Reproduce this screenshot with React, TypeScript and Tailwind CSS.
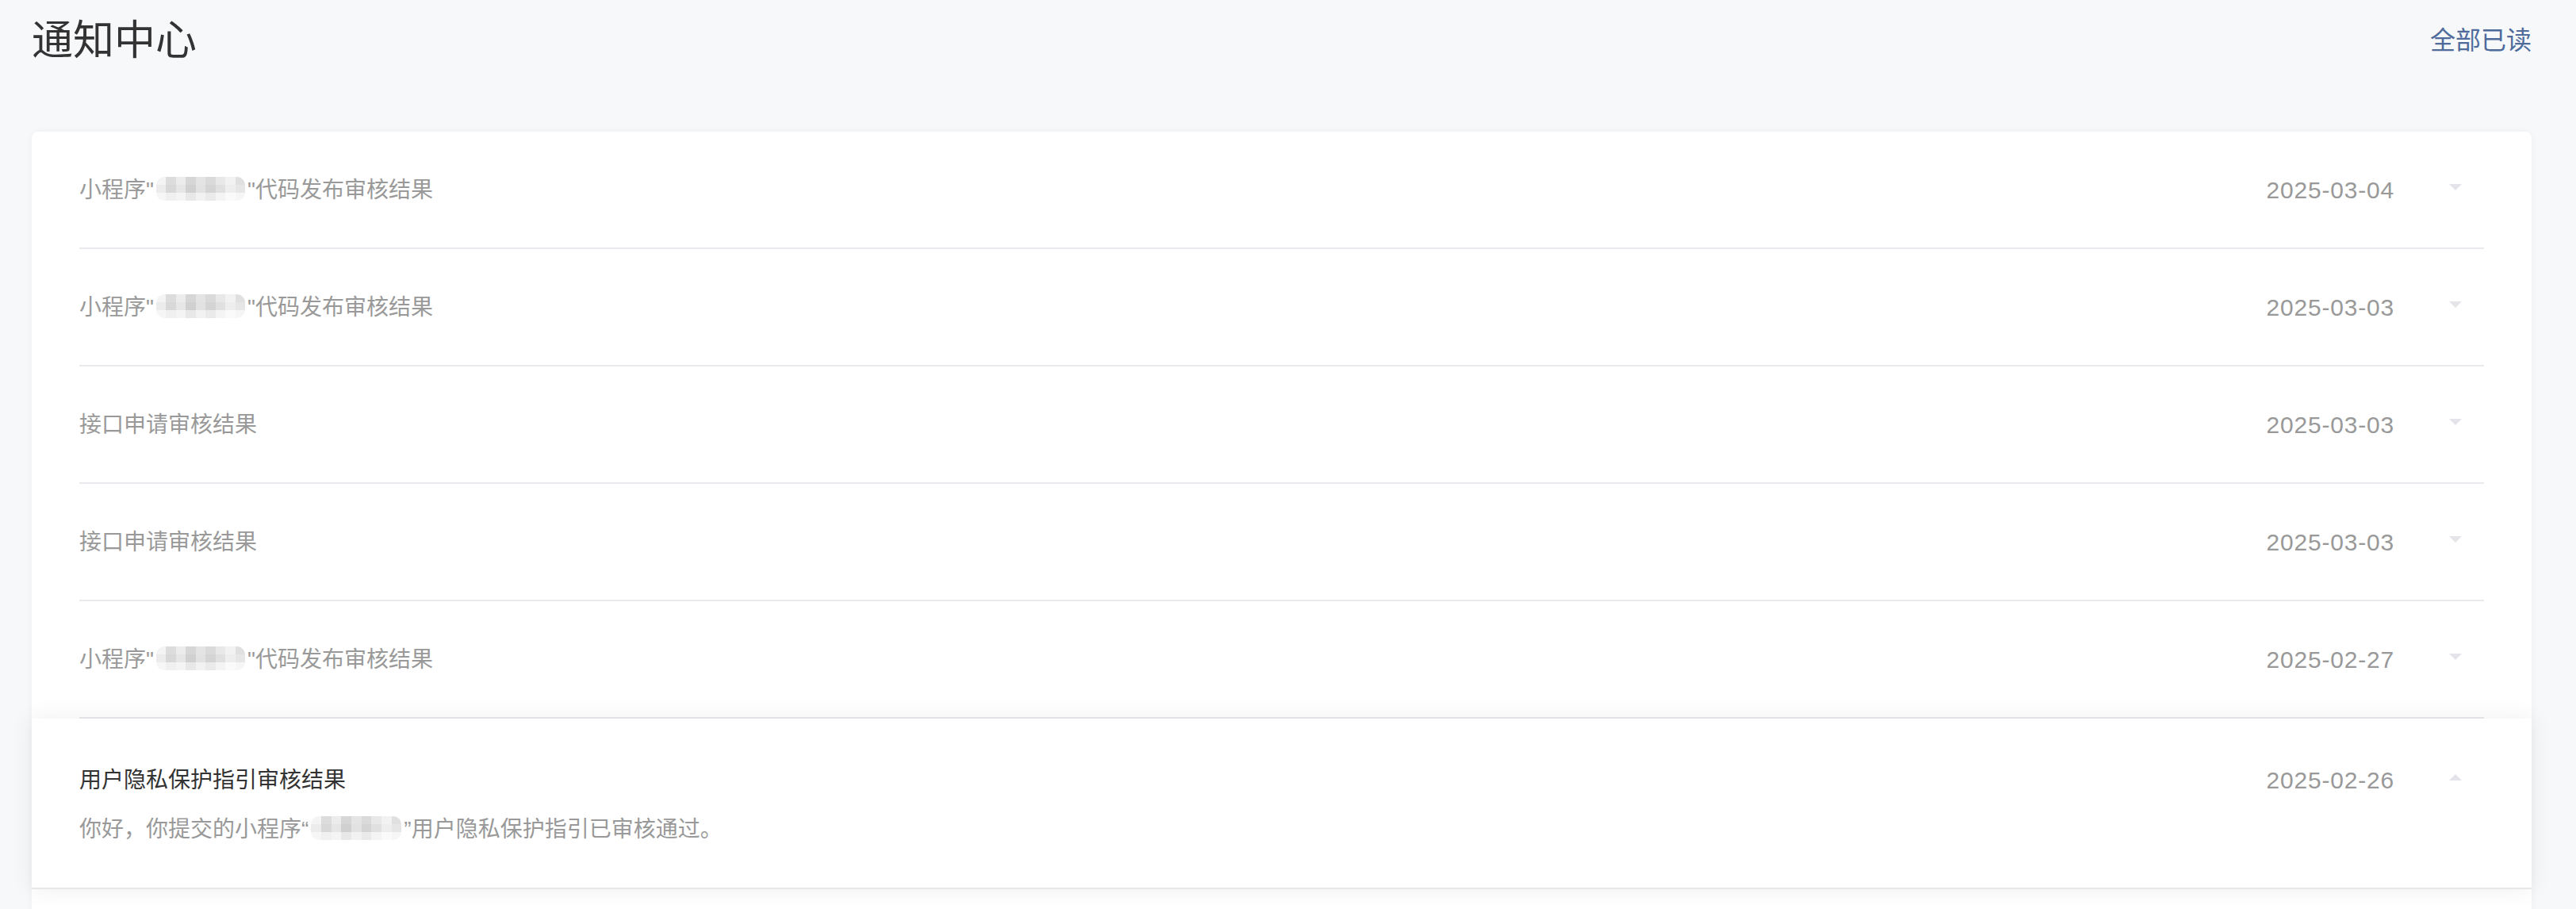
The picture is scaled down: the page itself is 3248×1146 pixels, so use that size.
import React from 'react';

type Notice = {
  id: number;
  prefix: string;
  masked?: boolean;
  suffix?: string;
  date: string;
};

const notices: Notice[] = [
  { id: 1, prefix: '小程序"', masked: true, suffix: '"代码发布审核结果', date: '2025-03-04' },
  { id: 2, prefix: '小程序"', masked: true, suffix: '"代码发布审核结果', date: '2025-03-03' },
  { id: 3, prefix: '接口申请审核结果', date: '2025-03-03' },
  { id: 4, prefix: '接口申请审核结果', date: '2025-03-03' },
  { id: 5, prefix: '小程序"', masked: true, suffix: '"代码发布审核结果', date: '2025-02-27' },
];

// pixelated name, rows of gray cells
const mosaicCells = [
  ['#f4f4f4', '#dcdcdc', '#ececec', '#d6d6d6', '#e4e4e4', '#dadada', '#e8e8e8', '#f2f2f2', '#e0e0e0'],
  ['#ececec', '#d8d8d8', '#e6e6e6', '#d0d0d0', '#e2e2e2', '#d4d4d4', '#e0e0e0', '#eeeeee', '#e6e6e6'],
  ['#f6f6f6', '#f0f0f0', '#f4f4f4', '#e8e8e8', '#f2f2f2', '#eaeaea', '#f4f4f4', '#fafafa', '#f6f6f6'],
];

const Mosaic = ({ width = 112 }: { width?: number }) => (
  <span
    className="inline-grid align-middle mx-[3px] rounded-[10px] overflow-hidden -mt-[4px]"
    style={{ width, gridTemplateColumns: `repeat(9, 1fr)` }}
  >
    {mosaicCells.flat().map((c, i) => (
      <span key={i} className="block h-[10px]" style={{ backgroundColor: c }} />
    ))}
  </span>
);

const Arrow = ({ up = false }: { up?: boolean }) =>
  up ? (
    <span className="block w-0 h-0 border-l-[8px] border-r-[8px] border-b-[8px] border-l-transparent border-r-transparent border-b-[#e4e4ea]" />
  ) : (
    <span className="block w-0 h-0 border-l-[8px] border-r-[8px] border-t-[8px] border-l-transparent border-r-transparent border-t-[#e4e4ea]" />
  );

export default function App() {
  return (
    <div
      className="min-h-[1146px] bg-[#f7f8fa] pl-[40px] pr-[56px] overflow-hidden"
      style={{ fontFamily: '"Liberation Sans", "Noto Sans CJK SC", sans-serif' }}
    >
      {/* Header */}
      <div className="h-[102px] flex items-center justify-between">
        <h1 className="text-[52px] leading-[75px] text-[#333333] font-normal">通知中心</h1>
        <button className="text-[32px] leading-[48px] text-[#4e6b9c]">全部已读</button>
      </div>

      {/* List card */}
      <div className="mt-[64px] bg-white rounded-[8px] shadow-[0_0_10px_rgba(0,0,0,0.04)]">
        {notices.map((n) => (
          <div key={n.id} className="mx-[60px] h-[148px] flex items-center border-b-2 border-[#e9e9ee]">
            <div className="flex-1 pt-[2px] text-[28px] leading-[42px] text-[#999999] flex items-center">
              <span>{n.prefix}</span>
              {n.masked && <Mosaic />}
              {n.suffix && <span>{n.suffix}</span>}
            </div>
            <span className="pt-[2px] text-[30px] leading-[42px] tracking-[0.8px] text-[#999999]">{n.date}</span>
            <div className="ml-[69px] mr-[28px] -mt-[6px]">
              <Arrow />
            </div>
          </div>
        ))}

        {/* Expanded notice */}
        <div className="relative z-10 bg-white px-[60px] pt-[57px] pb-[52px] border-b-2 border-[#e8e8ec] shadow-[0_0_28px_rgba(0,0,0,0.07)]">
          <div className="flex items-center">
            <div className="flex-1 text-[28px] leading-[42px] text-[#333333]">用户隐私保护指引审核结果</div>
            <span className="text-[30px] leading-[42px] tracking-[0.8px] text-[#999999]">2025-02-26</span>
            <div className="ml-[69px] mr-[28px] -mt-[8px]">
              <Arrow up />
            </div>
          </div>
          <div className="mt-[20px] text-[28px] leading-[42px] text-[#999999] flex items-center">
            <span>你好，你提交的小程序“</span>
            <Mosaic width={114} />
            <span>”用户隐私保护指引已审核通过。</span>
          </div>
        </div>
        <div className="h-[80px]" />
      </div>
    </div>
  );
}
